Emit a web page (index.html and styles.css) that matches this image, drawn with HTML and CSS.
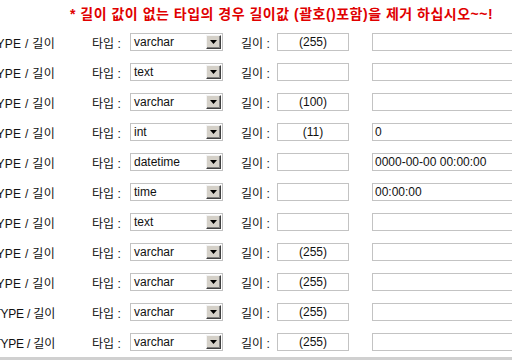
FILE: index.html
```html
<!DOCTYPE html>
<html lang="ko">
<head>
<meta charset="utf-8">
<link rel="stylesheet" href="styles.css">
</head>
<body>
<div class="page">
  <div class="title">* 길이 값이 없는 타입의 경우 길이값 (괄호()포함)을 제거 하십시오~~!</div>
  <div class="rows">
    <div class="row"><div class="lbl"><span>TYPE / 길이</span></div><div class="tl">타입 :</div><div class="sel"><span class="val">varchar</span><span class="btn"><svg width="7" height="4" viewBox="0 0 7 4"><path d="M0 0h7L3.5 4z" fill="#000"/></svg></span></div><div class="ll">길이 :</div><div class="len">(255)</div><div class="def"></div></div>
    <div class="row"><div class="lbl"><span>TYPE / 길이</span></div><div class="tl">타입 :</div><div class="sel"><span class="val">text</span><span class="btn"><svg width="7" height="4" viewBox="0 0 7 4"><path d="M0 0h7L3.5 4z" fill="#000"/></svg></span></div><div class="ll">길이 :</div><div class="len"></div><div class="def"></div></div>
    <div class="row"><div class="lbl"><span>TYPE / 길이</span></div><div class="tl">타입 :</div><div class="sel"><span class="val">varchar</span><span class="btn"><svg width="7" height="4" viewBox="0 0 7 4"><path d="M0 0h7L3.5 4z" fill="#000"/></svg></span></div><div class="ll">길이 :</div><div class="len">(100)</div><div class="def"></div></div>
    <div class="row"><div class="lbl"><span>TYPE / 길이</span></div><div class="tl">타입 :</div><div class="sel"><span class="val">int</span><span class="btn"><svg width="7" height="4" viewBox="0 0 7 4"><path d="M0 0h7L3.5 4z" fill="#000"/></svg></span></div><div class="ll">길이 :</div><div class="len">(11)</div><div class="def">0</div></div>
    <div class="row"><div class="lbl"><span>TYPE / 길이</span></div><div class="tl">타입 :</div><div class="sel"><span class="val">datetime</span><span class="btn"><svg width="7" height="4" viewBox="0 0 7 4"><path d="M0 0h7L3.5 4z" fill="#000"/></svg></span></div><div class="ll">길이 :</div><div class="len"></div><div class="def">0000-00-00 00:00:00</div></div>
    <div class="row"><div class="lbl"><span>TYPE / 길이</span></div><div class="tl">타입 :</div><div class="sel"><span class="val">time</span><span class="btn"><svg width="7" height="4" viewBox="0 0 7 4"><path d="M0 0h7L3.5 4z" fill="#000"/></svg></span></div><div class="ll">길이 :</div><div class="len"></div><div class="def">00:00:00</div></div>
    <div class="row"><div class="lbl"><span>TYPE / 길이</span></div><div class="tl">타입 :</div><div class="sel"><span class="val">text</span><span class="btn"><svg width="7" height="4" viewBox="0 0 7 4"><path d="M0 0h7L3.5 4z" fill="#000"/></svg></span></div><div class="ll">길이 :</div><div class="len"></div><div class="def"></div></div>
    <div class="row"><div class="lbl"><span>TYPE / 길이</span></div><div class="tl">타입 :</div><div class="sel"><span class="val">varchar</span><span class="btn"><svg width="7" height="4" viewBox="0 0 7 4"><path d="M0 0h7L3.5 4z" fill="#000"/></svg></span></div><div class="ll">길이 :</div><div class="len">(255)</div><div class="def"></div></div>
    <div class="row"><div class="lbl"><span>TYPE / 길이</span></div><div class="tl">타입 :</div><div class="sel"><span class="val">varchar</span><span class="btn"><svg width="7" height="4" viewBox="0 0 7 4"><path d="M0 0h7L3.5 4z" fill="#000"/></svg></span></div><div class="ll">길이 :</div><div class="len">(255)</div><div class="def"></div></div>
    <div class="row"><div class="lbl wide"><span>TYPE / 길이</span></div><div class="tl">타입 :</div><div class="sel"><span class="val">varchar</span><span class="btn"><svg width="7" height="4" viewBox="0 0 7 4"><path d="M0 0h7L3.5 4z" fill="#000"/></svg></span></div><div class="ll">길이 :</div><div class="len">(255)</div><div class="def"></div></div>
    <div class="row"><div class="lbl wide"><span>TYPE / 길이</span></div><div class="tl">타입 :</div><div class="sel"><span class="val">varchar</span><span class="btn"><svg width="7" height="4" viewBox="0 0 7 4"><path d="M0 0h7L3.5 4z" fill="#000"/></svg></span></div><div class="ll">길이 :</div><div class="len">(255)</div><div class="def"></div></div>
  </div>
  <div class="bottom"></div>
</div>
</body>
</html>
```

FILE: styles.css
```css
html, body {
  margin: 0;
  padding: 0;
  background: #fff;
  overflow: hidden;
}
.page {
  width: 512px;
  height: 360px;
  overflow: hidden;
  font-family: "Liberation Sans", "Noto Sans CJK KR", sans-serif;
  font-size: 12px;
  color: #111;
}
.title {
  height: 27px;
  box-sizing: border-box;
  padding: 5px 0 0 70px;
  font-size: 14px;
  letter-spacing: 0.5px;
  font-weight: bold;
  color: #e00000;
  white-space: nowrap;
  line-height: 18px;
}
.rows {
  display: flex;
  flex-direction: column;
}
.row {
  height: 30px;
  display: flex;
  align-items: center;
  white-space: nowrap;
}
.lbl {
  width: 55px;
  display: flex;
  justify-content: flex-end;
  flex-shrink: 0;
  letter-spacing: 0.3px;
}
.lbl.wide {
  letter-spacing: -0.2px;
}
.tl {
  margin-left: 37px;
  width: 38px;
  flex-shrink: 0;
}
.sel {
  width: 93px;
  height: 18px;
  box-sizing: border-box;
  border: 1px solid #c3c3c3;
  display: flex;
  align-items: center;
  justify-content: space-between;
  padding: 0 1px 0 3px;
  flex-shrink: 0;
}
.val {
  line-height: 16px;
}
.btn {
  width: 15px;
  height: 14px;
  box-sizing: border-box;
  background: #d4d0c8;
  border-top: 1px solid #f4f4f4;
  border-left: 1px solid #f4f4f4;
  border-right: 1px solid #404040;
  border-bottom: 1px solid #404040;
  box-shadow: inset -1px -1px 0 #808080;
  display: flex;
  align-items: center;
  justify-content: center;
}
.btn svg {
  display: block;
}
.ll {
  margin-left: 18px;
  width: 36px;
  flex-shrink: 0;
}
.len {
  width: 72px;
  height: 18px;
  box-sizing: border-box;
  border: 1px solid #c3c3c3;
  text-align: center;
  line-height: 16px;
  flex-shrink: 0;
}
.def {
  margin-left: 23px;
  width: 160px;
  height: 18px;
  box-sizing: border-box;
  border: 1px solid #c3c3c3;
  padding-left: 2px;
  line-height: 16px;
  flex-shrink: 0;
}
.bottom {
  height: 3px;
  background: #d0d0d0;
}
```
